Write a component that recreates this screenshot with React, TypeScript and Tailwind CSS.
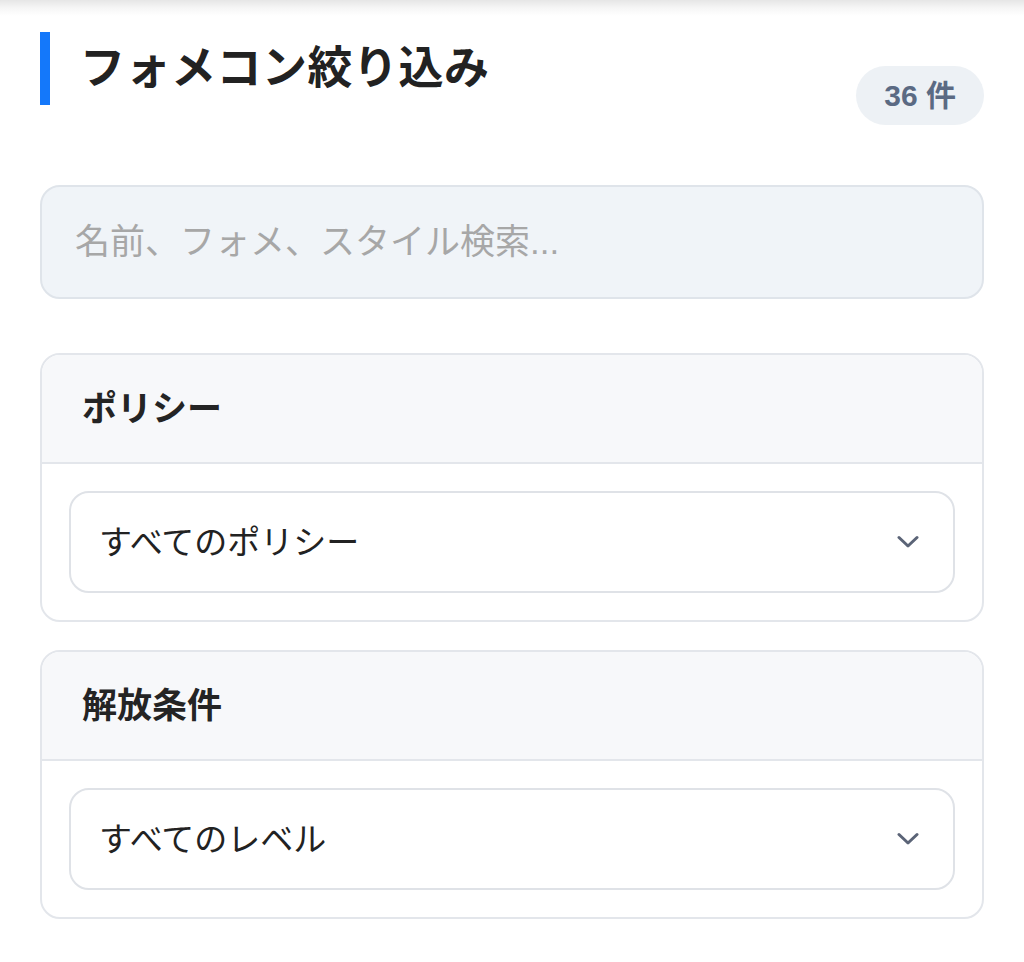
import React from "react";

const font = { fontFamily: '"Liberation Sans", "Noto Sans CJK JP", sans-serif' };

interface FilterCardProps {
  title: string;
  value: string;
}

const Chevron: React.FC = () => (
  <svg width="22" height="14" viewBox="0 0 22 14" fill="none" className="shrink-0">
    <polyline
      points="2,2.5 11,11 20,2.5"
      stroke="#5b6477"
      strokeWidth="3"
      strokeLinecap="round"
      strokeLinejoin="round"
    />
  </svg>
);

const FilterCard: React.FC<FilterCardProps> = ({ title, value }) => (
  <div className="rounded-[20px] border-2 border-[#e3e6eb] bg-white overflow-hidden">
    {/* header */}
    <div className="h-[109px] flex items-center px-[40px] bg-[#f7f8fa] border-b-2 border-[#e3e6eb]">
      <h2 className="text-[35px] leading-none font-bold text-[#242424]">{title}</h2>
    </div>
    {/* body */}
    <div className="px-[27px] py-[27px]">
      <button className="w-full h-[102px] flex items-center justify-between pl-[28px] pr-[34px] rounded-[20px] border-2 border-[#dfe2e7] bg-white text-left">
        <span className="text-[33px] leading-none text-[#222]">{value}</span>
        <Chevron />
      </button>
    </div>
  </div>
);

export default function App() {
  return (
    <div className="min-h-[962px] bg-white" style={font}>
      {/* shadow of the sticky bar above */}
      <div className="h-[16px] bg-gradient-to-b from-[#e6e6e6] via-[#f6f6f6] to-white" />

      <div className="px-[40px]">
        {/* title row */}
        <div className="mt-[16px] flex justify-between items-start">
          <div className="flex items-center gap-[30px]">
            <div className="w-[10px] h-[73px] bg-[#1478fa]" />
            <h1 className="text-[45px] leading-none font-bold text-[#222] tracking-[0.5px]">
              フォメコン絞り込み
            </h1>
          </div>
          <span className="mt-[34px] h-[59px] px-[28px] flex items-center rounded-full bg-[#edf1f5] text-[#5b6a83] text-[30px] font-bold">
            36 件
          </span>
        </div>

        {/* search */}
        <input
          type="text"
          placeholder="名前、フォメ、スタイル検索..."
          className="mt-[60px] w-full h-[114px] px-[33px] rounded-[20px] border-2 border-[#dfe4ea] bg-[#f0f4f8] text-[35px] text-[#222] placeholder:text-[#a7a7a7] outline-none"
        />

        {/* filters */}
        <div className="mt-[54px] flex flex-col gap-[28px]">
          <FilterCard title="ポリシー" value="すべてのポリシー" />
          <FilterCard title="解放条件" value="すべてのレベル" />
        </div>
      </div>
    </div>
  );
}
